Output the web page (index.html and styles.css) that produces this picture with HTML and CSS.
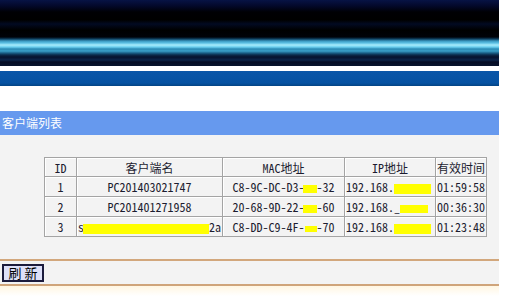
FILE: index.html
```html
<!DOCTYPE html>
<html>
<head>
<meta charset="utf-8">
<link rel="stylesheet" href="styles.css">
</head>
<body>
<div class="page">
  <div class="banner"></div>
  <div class="bluebar"></div>
  <div class="title">客户端列表</div>
  <div class="content">
    <table class="list">
      <tr>
        <th class="c-id">ID</th>
        <th class="c-name">客户端名</th>
        <th class="c-mac">MAC地址</th>
        <th class="c-ip">IP地址</th>
        <th class="c-time">有效时间</th>
      </tr>
      <tr>
        <td>1</td>
        <td>PC201403021747</td>
        <td>C8-9C-DC-D3-<span class="mask m-mac"></span>-32</td>
        <td class="left">192.168.<span class="mask m-ip"></span></td>
        <td class="left">01:59:58</td>
      </tr>
      <tr>
        <td>2</td>
        <td>PC201401271958</td>
        <td>20-68-9D-22-<span class="mask m-mac"></span>-60</td>
        <td class="left">192.168._<span class="mask m-ip2"></span></td>
        <td class="left">00:36:30</td>
      </tr>
      <tr>
        <td>3</td>
        <td class="left">s<span class="mask m-name"></span>2a</td>
        <td>C8-DD-C9-4F-<span class="mask m-mac3"></span>-70</td>
        <td class="left">192.168.<span class="mask m-ip"></span></td>
        <td class="left">01:23:48</td>
      </tr>
    </table>
  </div>
  <div class="actions">
    <button class="refresh">刷 新</button>
  </div>
  <div class="foot"></div>
</div>
</body>
</html>
```
FILE: styles.css
```css
html, body {
  margin: 0;
  padding: 0;
  background: #ffffff;
}
.page {
  width: 499px;
  font-family: "Noto Sans Mono CJK SC", "Noto Sans CJK SC", "DejaVu Sans Mono", monospace;
  font-size: 12px;
}
.banner {
  height: 66px;
  background: linear-gradient(to bottom,
    #071345 0px, #03082a 6px, #000004 12px, #000000 20px,
    #020a22 24px, #000000 30px, #000208 37px,
    #0d3e5e 39px, #3a98c0 41px, #5cc0e4 43px, #a8ecfc 45px, #6cd0f0 47px,
    #2a8ab4 49px, #3aa0c8 51px, #1a6088 53px, #0b2a4a 55px,
    #06122e 57px, #0c2448 60px, #050c24 62px, #08142e 66px);
}
.bluebar {
  margin-top: 5px;
  height: 15px;
  background: linear-gradient(to bottom, #0a56a8 0, #0652a2 12px, #044484 15px);
}
.title {
  margin-top: 25px;
  height: 24px;
  line-height: 24px;
  padding-left: 2px;
  background: #6699ee;
  color: #ffffff;
  font-family: "Noto Sans CJK SC", sans-serif;
  font-size: 12px;
}
.content {
  background: #f3f3f3;
  padding: 22px 0 22px 44px;
  border-bottom: 2px solid #d2a77c;
}
.list {
  border-collapse: collapse;
  table-layout: fixed;
  color: #1c1c30;
}
.list th, .list td {
  border: 1px solid #a4a4a4;
  box-shadow: inset 1px 1px 0 #ffffff;
  padding: 0;
  height: 19px;
  text-align: center;
  white-space: nowrap;
  overflow: hidden;
  font-weight: normal;
}
.list th { height: 18px; }
.list th:last-child {
  font-family: "Noto Sans CJK SC", sans-serif;
}
.list td.left { text-align: left; padding-left: 1px; }
.c-id { width: 31px; }
.c-name { width: 145px; }
.c-mac { width: 121px; }
.c-ip { width: 90px; }
.c-time { width: 50px; }
.mask {
  display: inline-block;
  background: #ffff00;
  vertical-align: middle;
}
.m-mac { width: 14px; height: 8px; margin-left: -2px; }
.m-mac3 { width: 12px; height: 6px; }
.m-ip { width: 37px; height: 10px; }
.m-ip2 { width: 28px; height: 8px; }
.m-name { width: 126px; height: 10px; margin-left: -1px; }
.actions {
  background: #f3f3f3;
  padding: 3px 0 2px 2px;
  border-bottom: 2px solid #cfa47a;
  display: flex;
}
.refresh {
  margin: 0;
  width: 42px;
  height: 18px;
  padding: 0;
  border: 2px solid #1b1b3c;
  background: #dde0f8;
  color: #000000;
  font-family: "Noto Sans CJK SC", sans-serif;
  font-size: 13px;
  line-height: 14px;
}
.foot {
  height: 10px;
  background: linear-gradient(to bottom, #fff6e2, #ffffff);
}
```
